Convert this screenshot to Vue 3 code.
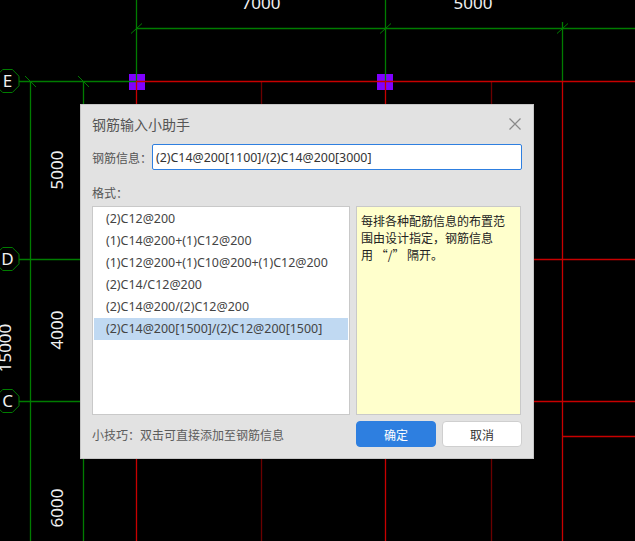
<script setup>
import { ref } from 'vue';

const GREEN = '#007c00';
const RED = '#c80000';
const DARK = '#6a0000';

// grid lines of the drawing: x1, y1, x2, y2, colour
const lines = [
  [136.5, 0, 136.5, 81, GREEN],
  [385.5, 0, 385.5, 81, GREEN],
  [562.5, 22, 562.5, 81, GREEN],
  [136, 28.5, 635, 28.5, GREEN],
  [19, 81.5, 136, 81.5, GREEN],
  [30.5, 81, 30.5, 541, GREEN],
  [83.5, 81, 83.5, 541, GREEN],
  [19, 259.5, 81, 259.5, GREEN],
  [19, 401.5, 81, 401.5, GREEN],
  [261.5, 82, 261.5, 541, DARK],
  [491.5, 82, 491.5, 541, DARK],
  [136, 81.5, 635, 81.5, RED],
  [136.5, 81, 136.5, 541, RED],
  [385.5, 81, 385.5, 541, RED],
  [562.5, 81, 562.5, 541, RED],
  [534, 259.5, 635, 259.5, RED],
  [534, 401.5, 635, 401.5, RED],
  [562, 436.5, 635, 436.5, RED],
];

// little slashes where the dimension lines cross
const ticks = [
  [25, 76, 36, 87],
  [78, 76, 89, 87],
  [131, 33.5, 142, 23.5],
  [380, 33.5, 391, 23.5],
  [557, 33.5, 568, 23.5],
];

const axes = [
  { label: 'E', y: 81 },
  { label: 'D', y: 259 },
  { label: 'C', y: 401 },
];

const dims = [
  { text: '7000', x: 261, y: 9, rot: 0 },
  { text: '5000', x: 473, y: 9, rot: 0 },
  { text: '5000', x: 63, y: 170, rot: -90 },
  { text: '4000', x: 63, y: 330, rot: -90 },
  { text: '6000', x: 63, y: 508, rot: -90 },
  { text: '15000', x: 11, y: 348, rot: -90 },
];

const octagon = (cy) => {
  const pts = [];
  for (let i = 0; i < 8; i++) {
    const a = (Math.PI / 4) * i + Math.PI / 8;
    pts.push(`${(7.5 + 12.5 * Math.cos(a)).toFixed(1)},${(cy + 12.5 * Math.sin(a)).toFixed(1)}`);
  }
  return pts.join(' ');
};

const formats = [
  '(2)C12@200',
  '(1)C14@200+(1)C12@200',
  '(1)C12@200+(1)C10@200+(1)C12@200',
  '(2)C14/C12@200',
  '(2)C14@200/(2)C12@200',
  '(2)C14@200[1500]/(2)C12@200[1500]',
];

const selected = ref(5);
const info = ref('(2)C14@200[1100]/(2)C14@200[3000]');
</script>

<template>
  <div class="page">
    <svg class="drawing" width="635" height="541" viewBox="0 0 635 541">
      <rect x="129" y="74" width="16" height="16" fill="#8000ff" />
      <rect x="377" y="74" width="16" height="16" fill="#8000ff" />
      <line
        v-for="(l, i) in lines"
        :key="i"
        :x1="l[0]"
        :y1="l[1]"
        :x2="l[2]"
        :y2="l[3]"
        :stroke="l[4]"
        stroke-width="1.3"
      />
      <line
        v-for="(t, i) in ticks"
        :key="'t' + i"
        :x1="t[0]"
        :y1="t[1]"
        :x2="t[2]"
        :y2="t[3]"
        :stroke="GREEN"
        stroke-width="1"
      />
      <g v-for="a in axes" :key="a.label">
        <polygon :points="octagon(a.y)" fill="#000" :stroke="GREEN" stroke-width="1" />
        <text x="7.5" :y="a.y + 6" text-anchor="middle" class="dim">{{ a.label }}</text>
      </g>
      <text
        v-for="(d, i) in dims"
        :key="'d' + i"
        class="dim"
        text-anchor="middle"
        :transform="`translate(${d.x} ${d.y}) rotate(${d.rot})`"
      >{{ d.text }}</text>
    </svg>

    <div class="dialog">
      <div class="title-bar">
        <span class="title">钢筋输入小助手</span>
        <svg class="close" width="14" height="14" viewBox="0 0 14 14">
          <path d="M1.5 1.5L12.5 12.5M12.5 1.5L1.5 12.5" stroke="#8a8a8a" stroke-width="1.2" fill="none" />
        </svg>
      </div>

      <div class="info-row">
        <label for="info">钢筋信息&#xFF1A;</label>
        <input id="info" v-model="info" />
      </div>

      <div class="format-label">格式&#xFF1A;</div>

      <div class="panels">
        <ul class="format-list">
          <li
            v-for="(f, i) in formats"
            :key="f"
            :class="{ active: selected === i }"
            @click="selected = i"
          >{{ f }}</li>
        </ul>
        <div class="hint">每排各种配筋信息的布置范围由设计指定&#xFF0C;钢筋信息<br />用 “/” 隔开。</div>
      </div>

      <div class="footer">
        <span class="tip">小技巧&#xFF1A;双击可直接添加至钢筋信息</span>
        <div class="actions">
          <button class="ok">确定</button>
          <button class="cancel">取消</button>
        </div>
      </div>
    </div>
  </div>
</template>

<style>
html,
body {
  margin: 0;
  background: #000;
}
</style>

<style scoped>
.page {
  position: relative;
  width: 635px;
  height: 541px;
  overflow: hidden;
  background: #000;
  font-family: "Noto Sans", "Noto Sans CJK SC", sans-serif;
}

.drawing {
  display: block;
}

.dim {
  fill: #f0f0f0;
  font-size: 17px;
  font-family: "Noto Sans", sans-serif;
}

.dialog {
  position: absolute;
  left: 80px;
  top: 104px;
  width: 454px;
  height: 355px;
  box-sizing: border-box;
  padding: 0 11px;
  background: #e2e2e2;
  border: 1px solid #c6c6c6;
  display: flex;
  flex-direction: column;
}

.title-bar {
  height: 38px;
  display: flex;
  align-items: center;
  justify-content: space-between;
}

.title {
  font-size: 14px;
  color: #555;
}

.info-row {
  display: flex;
  align-items: center;
  height: 26px;
  margin-top: 1px;
}

.info-row label {
  width: 60px;
  flex: none;
  font-family: "Noto Sans CJK SC", sans-serif;
  font-size: 12px;
  color: #555;
  white-space: nowrap;
}

.info-row input {
  flex: 1;
  min-width: 0;
  height: 26px;
  box-sizing: border-box;
  padding: 0 3px;
  border: 1px solid #2e7fe0;
  border-radius: 2px;
  outline: none;
  background: #fff;
  color: #333;
  font-family: inherit;
  font-size: 12.4px;
}

.format-label {
  margin-top: 14px;
  font-family: "Noto Sans CJK SC", sans-serif;
  font-size: 12px;
  line-height: 17px;
  color: #555;
}

.panels {
  display: flex;
  gap: 6px;
  height: 209px;
  margin-top: 5px;
  margin-right: 1px;
}

.format-list {
  width: 258px;
  box-sizing: border-box;
  margin: 0;
  padding: 1px;
  list-style: none;
  background: #fff;
  border: 1px solid #c9c9c9;
}

.format-list li {
  height: 22px;
  line-height: 21px;
  padding-left: 12px;
  font-size: 12.45px;
  color: #444;
  white-space: nowrap;
}

.format-list li.active {
  background: #c0d9f2;
}

.hint {
  flex: 1;
  box-sizing: border-box;
  padding: 5px 4px;
  background: #ffffcc;
  border: 1px solid #c9c9c9;
  font-family: "Noto Sans CJK SC", sans-serif;
  font-size: 12px;
  line-height: 17px;
  color: #222;
}

.footer {
  display: flex;
  align-items: center;
  justify-content: space-between;
  height: 26px;
  margin-top: 6px;
}

.tip {
  font-family: "Noto Sans CJK SC", sans-serif;
  font-size: 12px;
  color: #5c5c5c;
}

.actions {
  display: flex;
  gap: 6px;
}

.actions button {
  width: 80px;
  height: 26px;
  padding: 0;
  border-radius: 4px;
  font-family: "Noto Sans CJK SC", sans-serif;
  font-size: 12px;
}

.ok {
  background: #2e7fe0;
  border: 1px solid #2e7fe0;
  color: #fff;
}

.cancel {
  background: #fff;
  border: 1px solid #cfcfcf;
  color: #333;
}
</style>
